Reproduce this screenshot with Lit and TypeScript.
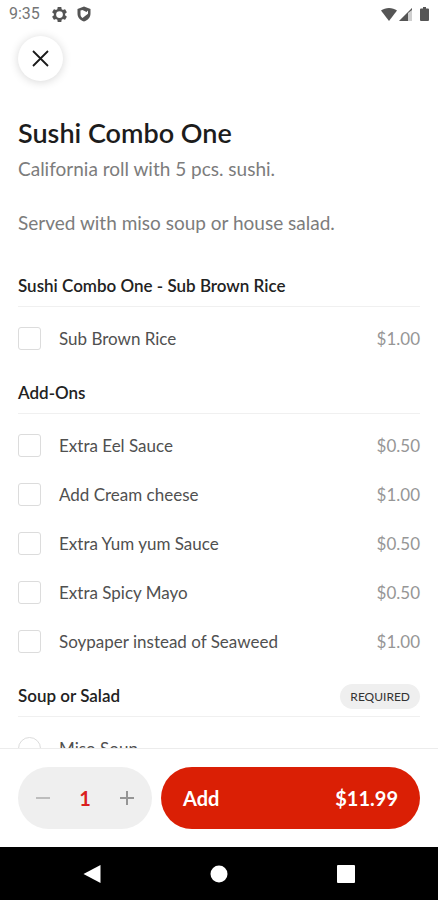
import { LitElement, html, css, svg } from "lit";
import { customElement, property, state } from "lit/decorators.js";

interface Option {
  name: string;
  price?: string;
}

interface Group {
  title: string;
  required?: boolean;
  options: Option[];
}

const GROUPS: Group[] = [
  {
    title: "Sushi Combo One - Sub Brown Rice",
    options: [{ name: "Sub Brown Rice", price: "$1.00" }],
  },
  {
    title: "Add-Ons",
    options: [
      { name: "Extra Eel Sauce", price: "$0.50" },
      { name: "Add Cream cheese", price: "$1.00" },
      { name: "Extra Yum yum Sauce", price: "$0.50" },
      { name: "Extra Spicy Mayo", price: "$0.50" },
      { name: "Soypaper instead of Seaweed", price: "$1.00" },
    ],
  },
  {
    title: "Soup or Salad",
    required: true,
    options: [{ name: "Miso Soup" }],
  },
];

@customElement("status-bar")
export class StatusBar extends LitElement {
  static styles = css`
    :host {
      display: flex;
      align-items: center;
      height: 28px;
      padding: 0 9px;
      color: #555;
      font: 400 16px/20px Roboto, sans-serif;
      flex: none;
    }
    .time {
      color: #757575;
      margin-right: 12px;
    }
    .gear {
      margin-right: 10px;
    }
    .spacer {
      flex: 1;
    }
    .signal {
      margin: 0 8px 0 2px;
    }
    svg {
      display: block;
      fill: currentColor;
    }
  `;

  render() {
    return html`
      <span class="time">9:35</span>
      <svg class="gear" width="15" height="15" viewBox="2 2 20 20" aria-hidden="true">
        <path fill-rule="evenodd" d="M19.43 12.98c.04-.32.07-.64.07-.98s-.03-.66-.07-.98l2.11-1.65c.19-.15.24-.42.12-.64l-2-3.46c-.12-.22-.39-.3-.61-.22l-2.49 1c-.52-.4-1.08-.73-1.69-.98l-.38-2.65C14.46 2.18 14.25 2 14 2h-4c-.25 0-.46.18-.49.42l-.38 2.65c-.61.25-1.17.59-1.69.98l-2.49-1c-.23-.09-.49 0-.61.22l-2 3.46c-.13.22-.07.49.12.64l2.11 1.65c-.04.32-.07.65-.07.98s.03.66.07.98l-2.11 1.65c-.19.15-.24.42-.12.64l2 3.46c.12.22.39.3.61.22l2.49-1c.52.4 1.08.73 1.69.98l.38 2.65c.03.24.24.42.49.42h4c.25 0 .46-.18.49-.42l.38-2.65c.61-.25 1.17-.59 1.69-.98l2.49 1c.23.09.49 0 .61-.22l2-3.46c.12-.22.07-.49-.12-.64l-2.11-1.65zM12 16.500a4.500 4.500 0 1 1 0-9 4.500 4.500 0 0 1 0 9z"/>
      </svg>
      <svg width="14" height="16" viewBox="0 0 14 16" aria-hidden="true">
        <path fill-rule="evenodd" d="M7 .5 13.500 3v4.500c0 3.800-2.600 6.900-6.500 8-3.900-1.100-6.500-4.200-6.500-8V3L7 .5zM3.500 4.500v4c0 1.500.8 2.600 2 3.500l5.500-4.200V4.500L9.500 6 5.500 4z"/>
      </svg>
      <span class="spacer"></span>
      <svg width="16" height="13" viewBox="0 0 16 13" aria-hidden="true">
        <path d="M0 2.600C2.200.9 5 0 8 0s5.800.9 8 2.600L8 13z"/>
      </svg>
      <svg class="signal" width="13" height="13" viewBox="0 0 13 13" aria-hidden="true">
        <path d="M0 13 13 0v13z" fill="#cfcfcf"/>
        <path d="M0 13 13 0v2L9 5v8z"/>
      </svg>
      <svg width="9" height="14" viewBox="0 0 9 14" aria-hidden="true">
        <path d="M3 0h3v1.500h2a1 1 0 0 1 1 1V13a1 1 0 0 1-1 1H1a1 1 0 0 1-1-1V2.500a1 1 0 0 1 1-1h2z"/>
      </svg>
    `;
  }
}

@customElement("option-group")
export class OptionGroup extends LitElement {
  @property({ attribute: false }) group!: Group;

  static styles = css`
    :host {
      display: block;
      margin-bottom: 10px;
    }
    .head {
      display: flex;
      align-items: center;
      justify-content: space-between;
      height: 40px;
      border-bottom: 1px solid #f0f0f0;
    }
    .title {
      margin: 0;
      font-size: 17px;
      line-height: 20px;
      font-weight: 600;
      color: #222;
    }
    .badge {
      padding: 0 10px;
      border-radius: 13px;
      background: #efefef;
      color: #333;
      font-size: 12px;
      line-height: 25px;
    }
    .list {
      list-style: none;
      margin: 0;
      padding: 7px 0 0;
    }
    .row {
      display: flex;
      align-items: center;
      height: 49px;
      font-size: 17px;
      line-height: 24px;
      color: #505050;
    }
    .box {
      appearance: none;
      flex: none;
      width: 23px;
      height: 23px;
      margin: 0 18px 0 0;
      border: 1px solid #dcdcdc;
      border-radius: 3px;
      background: #fff;
    }
    .box:checked {
      background: #da1f05;
      border-color: #da1f05;
    }
    .round {
      border-radius: 50%;
    }
    .price {
      margin-left: auto;
      color: #969696;
    }
  `;

  render() {
    const { title, required, options } = this.group;
    return html`
      <div class="head">
        <h2 class="title">${title}</h2>
        ${required ? html`<span class="badge">REQUIRED</span>` : null}
      </div>
      <ul class="list">
        ${options.map(
          (o) => html`
            <li>
              <label class="row">
                <input
                  class="box ${required ? "round" : ""}"
                  type=${required ? "radio" : "checkbox"}
                  name=${title}
                />
                <span>${o.name}</span>
                ${o.price ? html`<span class="price">${o.price}</span>` : null}
              </label>
            </li>
          `
        )}
      </ul>
    `;
  }
}

@customElement("app-root")
export class AppRoot extends LitElement {
  @state() private quantity = 1;

  static styles = css`
    :host {
      display: flex;
      flex-direction: column;
      height: 100vh;
      background: #fff;
      font-family: Lato, sans-serif;
    }
    .content {
      flex: 1;
      min-height: 0;
      overflow: hidden;
      padding: 8px 18px 0;
    }
    button {
      font: inherit;
      border: 0;
      padding: 0;
      cursor: pointer;
    }
    .close {
      display: grid;
      place-items: center;
      width: 45px;
      height: 45px;
      border-radius: 50%;
      background: #fff;
      box-shadow: 0 1px 10px rgba(0, 0, 0, 0.16);
    }
    .name {
      margin: 36px 0 0;
      font-size: 27px;
      line-height: 32px;
      font-weight: 600;
      color: #1c1c1c;
    }
    .about {
      margin: 6px 0 30px;
      font-size: 19px;
      line-height: 27px;
      color: #7c7c7c;
      white-space: pre-line;
    }
    .order {
      display: flex;
      gap: 9px;
      padding: 18px;
      border-top: 1px solid #ececec;
      flex: none;
    }
    .stepper {
      display: flex;
      align-items: center;
      justify-content: space-between;
      width: 134px;
      height: 62px;
      padding: 0 8px;
      box-sizing: border-box;
      border-radius: 31px;
      background: #efefef;
    }
    .step {
      display: grid;
      place-items: center;
      width: 34px;
      height: 44px;
      background: none;
    }
    .count {
      color: #da1f1f;
      font-size: 20px;
      font-weight: 700;
    }
    .add {
      flex: 1;
      display: flex;
      align-items: center;
      justify-content: space-between;
      height: 62px;
      padding: 0 22px;
      border-radius: 31px;
      background: #da1f05;
      color: #fff;
      font-size: 20px;
      font-weight: 700;
    }
    .nav {
      display: flex;
      justify-content: space-around;
      align-items: center;
      height: 53px;
      padding: 0 29px;
      background: #000;
      flex: none;
    }
    .key {
      display: grid;
      place-items: center;
      width: 48px;
      height: 48px;
      background: none;
    }
    svg {
      display: block;
    }
  `;

  private change(by: number) {
    this.quantity = Math.max(1, this.quantity + by);
  }

  private key(label: string, shape: unknown) {
    return html`<button class="key" aria-label=${label}>
      <svg width="18" height="18" viewBox="0 0 18 18" fill="#fff">${shape}</svg>
    </button>`;
  }

  render() {
    return html`
      <status-bar></status-bar>
      <main class="content">
        <button class="close" aria-label="Close">
          <svg width="17" height="17" viewBox="0 0 17 17" fill="none" stroke="#1a1a1a" stroke-width="1.800">
            <path d="M1 1l15 15M16 1L1 16" />
          </svg>
        </button>
        <h1 class="name">Sushi Combo One</h1>
        <p class="about">${"California roll with 5 pcs. sushi.\n\nServed with miso soup or house salad."}</p>
        ${GROUPS.map((g) => html`<option-group .group=${g}></option-group>`)}
      </main>
      <footer class="order">
        <div class="stepper">
          <button class="step" aria-label="Decrease quantity" @click=${() => this.change(-1)}>
            <svg width="14" height="14" viewBox="0 0 14 14" stroke="#bdbdbd" stroke-width="2"><path d="M0 7h14" /></svg>
          </button>
          <output class="count">${this.quantity}</output>
          <button class="step" aria-label="Increase quantity" @click=${() => this.change(1)}>
            <svg width="14" height="14" viewBox="0 0 14 14" stroke="#959595" stroke-width="2"><path d="M0 7h14M7 0v14" /></svg>
          </button>
        </div>
        <button class="add">
          <span>Add</span>
          <span>$${(11.99 * this.quantity).toFixed(2)}</span>
        </button>
      </footer>
      <nav class="nav" aria-label="System">
        ${this.key("Back", svg`<path d="M17.500 0v18L0.500 9z" />`)}
        ${this.key("Home", svg`<circle cx="9" cy="9" r="8.500" />`)}
        ${this.key("Recent apps", svg`<rect width="18" height="18" rx="1" />`)}
      </nav>
    `;
  }
}
